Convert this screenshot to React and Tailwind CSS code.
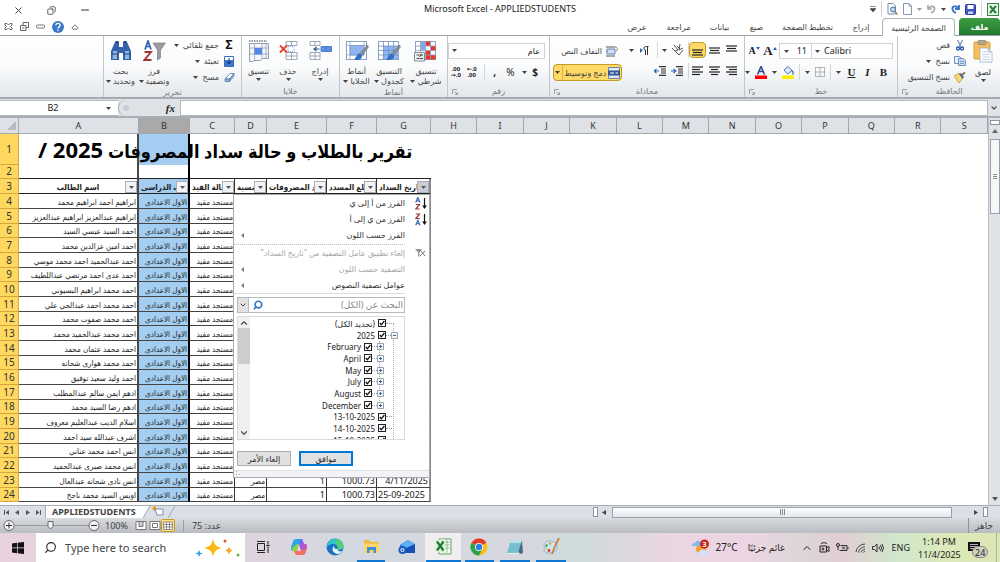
import { useState } from 'react'
import { Search, ChevronUp, ChevronDown, X, Minus, Copy } from 'lucide-react'
import clsx from 'clsx'

const UI = "font-['Noto_Sans','DejaVu_Sans',sans-serif]"
const CELL = "font-['Noto_Sans','DejaVu_Sans_Condensed','DejaVu_Sans',sans-serif]"

const tabs = [
  { label: 'إدراج', w: 'w-[42px]' },
  { label: 'تخطيط الصفحة', w: 'w-[65px]' },
  { label: 'صيغ', w: 'w-[37px]' },
  { label: 'بيانات', w: 'w-[37px]' },
  { label: 'مراجعة', w: 'w-[45px]' },
  { label: 'عرض', w: 'w-[38px]' },
]

const students = [
  'ابراهيم احمد ابراهيم محمد',
  'ابراهيم عبدالعزيز ابراهيم عبدالعزيز',
  'احمد السيد عيسي السيد',
  'احمد امين عزالدين محمد',
  'احمد عبدالحميد احمد محمد موسي',
  'احمد عدى احمد مرتضي عبداللطيف',
  'احمد محمد ابراهيم البسيوني',
  'احمد محمد احمد عبدالحي علي',
  'احمد محمد صفوت محمد',
  'احمد محمد عبدالحميد محمد',
  'احمد محمد عثمان محمد',
  'احمد محمد هوارى شحاته',
  'احمد وليد سعيد توفيق',
  'ادهم ايمن سالم عبدالمطلب',
  'ادهم رضا السيد محمد',
  'اسلام الديب عبدالعليم معروف',
  'اشرف عبدالله سيد احمد',
  'انس احمد محمد عناني',
  'انس محمد صبرى عبدالحميد',
  'انس نادى شحاته عبدالعال',
  'اويس السيد محمد ناجح',
]

// nationality, number of payments, amount, date
const payments = {
  23: ['مصر', '1', '1000.73', '4/11/2025'],
  24: ['مصر', '1', '1000.73', '25-09-2025'],
}

const headers = ['اسم الطالب', 'الصف الدراسى', 'حالة القيد', 'الجنسية', 'عدد المصروفات', 'مبلغ المسدد', 'تاريخ السداد']
const columns = 'ABCDEFGHIJKLMNOPQRS'.split('')

const tree = [
  { label: '(تحديد الكل)', level: 0 },
  { label: '2025', level: 0, box: '-' },
  { label: 'February', level: 1, box: '+' },
  { label: 'April', level: 1, box: '+' },
  { label: 'May', level: 1, box: '+' },
  { label: 'July', level: 1, box: '+' },
  { label: 'August', level: 1, box: '+' },
  { label: 'December', level: 1, box: '+' },
  { label: '13-10-2025', level: 0 },
  { label: '14-10-2025', level: 0 },
  { label: '15-10-2025', level: 0 },
]

/* ---------- small shared parts ---------- */

function Caret({ className = 'text-[#444]' }) {
  return (
    <svg width="5" height="3" viewBox="0 0 5 3" className={clsx('shrink-0', className)}>
      <path d="M0 0h5L2.500 3z" fill="currentColor" />
    </svg>
  )
}

function Sep() {
  return <span className="w-px h-4 bg-[#d3d6da] shrink-0" />
}

function Group({ label, w, launcher, children }) {
  return (
    <section className={clsx('flex flex-col border-l border-[#c3c7cc] shrink-0', w)}>
      <div className="h-[50px] flex">{children}</div>
      <div className="h-3 relative flex items-center justify-center text-[8px] leading-3 text-[#777]">
        {label}
        {launcher && (
          <svg width="6" height="6" viewBox="0 0 6 6" className="absolute left-1 top-1" fill="none" stroke="#8a8f96">
            <path d="M.5 5V.5H5M2.500 2.500l3 3M5.500 3v2.500H3" strokeWidth=".8" />
          </svg>
        )}
      </div>
    </section>
  )
}

function BigButton({ icon, lines, w, caretBelow }) {
  return (
    <button className={clsx('flex flex-col items-center pt-1 shrink-0', w)}>
      {icon}
      <span className="text-[8px] leading-[10px] mt-1 whitespace-nowrap">{lines[0]}</span>
      <span className={clsx('text-[8px] leading-[10px] flex items-center gap-0.5 whitespace-nowrap', caretBelow ? 'h-1.5' : 'h-[10px]')}>
        {lines[1]}
        <Caret />
      </span>
    </button>
  )
}

function SmallButton({ icon, label, caret }) {
  return (
    <button className="h-4 flex items-center gap-1 text-[8px] leading-4 whitespace-nowrap">
      <span className="w-3 flex justify-center">{icon}</span>
      {label}
      {caret && <Caret />}
    </button>
  )
}

function Lines({ rows, hl }) {
  return (
    <button className={clsx('w-[17px] h-4 flex items-center justify-center shrink-0', hl && 'rounded-sm border border-[#c29b29] bg-[#ffd966]')}>
      <svg width="11" height="11" viewBox="0 0 11 11" stroke="#222" strokeWidth="1.200" className="shrink-0">
        {rows.map(([x1, x2, y]) => <path key={y} d={`M${x1} ${y}H${x2}`} />)}
      </svg>
    </button>
  )
}

/* ---------- ribbon drawings ---------- */

const PasteIcon = (
  <svg width="20" height="23" viewBox="0 0 20 23">
    <rect x="1" y="2" width="16" height="17" rx="1" fill="#f5bd5c" stroke="#dba142" />
    <rect x="5" y="0.500" width="8" height="4" rx="1" fill="#b8a88a" stroke="#8b7d64" strokeWidth=".7" />
    <path d="M7 8h8l4 4v10H7z" fill="#fff" stroke="#9db0c8" strokeWidth=".8" />
    <path d="M9 12h5M9 14.500h8M9 17h8M9 19.500h8" stroke="#b9c8dc" strokeWidth=".8" />
    <path d="M15 8v4h4" fill="#dbe6f3" stroke="#9db0c8" strokeWidth=".8" />
  </svg>
)

const CutIcon = (
  <svg width="8" height="11" viewBox="0 0 8 11" fill="none">
    <path d="M1.500 0l3.500 7M6.500 0L3 7" stroke="#6c8db5" strokeWidth="1.200" />
    <circle cx="2" cy="8.500" r="1.500" stroke="#2456a6" strokeWidth="1.300" />
    <circle cx="6" cy="8.500" r="1.500" stroke="#2456a6" strokeWidth="1.300" />
  </svg>
)

const CopyIcon = (
  <svg width="12" height="10" viewBox="0 0 12 10">
    <path d="M.5.5h5l2 2v5h-7z" fill="#e5effb" stroke="#5579ad" strokeWidth=".8" />
    <path d="M4.500 2.500h4.500l2.500 2v5h-7z" fill="#c9ddf5" stroke="#5579ad" strokeWidth=".8" />
    <path d="M6 5.500h4M6 7.500h4" stroke="#5579ad" strokeWidth=".7" />
  </svg>
)

const PainterIcon = (
  <svg width="12" height="11" viewBox="0 0 12 11">
    <path d="M0 4l5-3 4 5-4 5z" fill="#f6d675" stroke="#c09132" strokeWidth=".7" />
    <path d="M5 2l2-1 3 4-1.500 2z" fill="#566b8d" />
    <path d="M8 3l3-2.500" stroke="#7b5425" strokeWidth="1.600" />
  </svg>
)

const ConditionalIcon = (
  <svg width="24" height="22" viewBox="0 0 24 22">
    <rect x="1.500" y="1.500" width="20" height="18" fill="#fff" stroke="#8aa2c4" />
    <path d="M11.500 1.500h5V6h-5zM16.500 6h5v4.500h-5zM11.500 10.500h5v4.500h-5zM11.500 15h10v4.500h-10z" fill="#e33a2c" />
    <path d="M6.500 1.500h5v9h-5z" fill="#7fabec" />
    <path d="M1.500 6h20M1.500 10.500h20M1.500 15h20M6.500 1.500v18M11.500 1.500v18M16.500 1.500v18" stroke="#8aa2c4" strokeWidth=".8" />
    <path d="M.5 12.500h10v8.500H.5z" fill="#eef1f5" stroke="#74808f" strokeWidth=".9" />
    <path d="M2.500 15h3M2.500 18.500h3M7.500 14L5.500 17M6 15h3M6 18.500h3" stroke="#333" strokeWidth=".9" />
  </svg>
)

function Brush() {
  return (
    <g>
      <path d="M22.500 5l-8 9 2 2L23.500 7z" fill="#8c8f96" stroke="#5d6066" strokeWidth=".5" />
      <path d="M14.500 13.500c-3 .5-3 4-5.500 6 4 1.500 8 0 8-4z" fill="#2f6fc5" />
    </g>
  )
}

const TableStyleIcon = (
  <svg width="24" height="22" viewBox="0 0 24 22">
    <rect x="1.500" y="1.500" width="20" height="18" fill="#fff" stroke="#8aa2c4" />
    <path d="M6.500 6h15v13h-15z" fill="#8eb7f2" />
    <path d="M1.500 6h20M1.500 10.500h20M1.500 15h20M6.500 1.500v18M11.500 1.500v18M16.500 1.500v18" stroke="#6f8fc0" strokeWidth=".8" />
    <Brush />
  </svg>
)

const CellStyleIcon = (
  <svg width="24" height="22" viewBox="0 0 24 22">
    <rect x="1.500" y="1.500" width="20" height="18" fill="#fff" stroke="#8aa2c4" />
    <path d="M5 5.500h14V15H5z" fill="#8eb7f2" stroke="#6f8fc0" strokeWidth=".8" />
    <path d="M5 1.500v18M1.500 5.500h20M19 1.500V15M1.500 15h17" stroke="#8aa2c4" strokeWidth=".7" />
    <Brush />
  </svg>
)

const InsertIcon = (
  <svg width="23" height="22" viewBox="0 0 23 22" fill="#fff" stroke="#8793a6" strokeWidth=".8">
    <path d="M1 1.500h10v4H1zM6 1.500v4M1 12.500h10v7H1zM6 12.500v7M1 16h10" />
    <path d="M12 6.500h10.500v5H12z" fill="#5b93e8" stroke="#3d6bb5" />
    <path d="M17 6.500v5" stroke="#3d6bb5" />
    <path d="M10.500 9H6M7.500 7L5 9l2.500 2" fill="none" stroke="#24588f" strokeWidth="1.200" />
  </svg>
)

const DeleteIcon = (
  <svg width="19" height="22" viewBox="0 0 19 22" fill="#fff" stroke="#8793a6" strokeWidth=".8">
    <path d="M7 1.500h11v4H7zM12.500 1.500v4M7 12.500h11v7H7zM12.500 12.500v7M7 16h11" />
    <path d="M9 6.500h6v5H9z" stroke="#5b93e8" strokeDasharray="1 1" />
    <path d="M1 5.500l7 7M8 5.500l-7 7" stroke="#e2412e" strokeWidth="1.800" />
  </svg>
)

const FormatIcon = (
  <svg width="24" height="22" viewBox="0 0 24 22">
    <path d="M2.500 3.500h19v15h-6l-2 2h-6l-2 1h-3z" fill="#f4f6f9" stroke="#7a89a0" strokeWidth=".8" />
    <path d="M2.500 8h19M2.500 14h19M7.500 3.500v17M15 3.500v15M19 3.500v15" stroke="#93a2b9" strokeWidth=".8" />
    <path d="M7.500 8H15v6.500H7.500z" fill="#4f8be6" />
    <path d="M2 1h18" stroke="#333" strokeDasharray="1.500 1" />
  </svg>
)

const SortFilterIcon = (
  <svg width="23" height="22" viewBox="0 0 23 22">
    <path d="M10 3h12.500l-5 7v8l-3 2v-10z" fill="#9a9da3" stroke="#6f7278" strokeWidth=".6" />
    <path d="M2 9.500L5 1l3 8.500M3 6.500h4" fill="none" stroke="#2f5fb0" strokeWidth="1.700" />
    <path d="M1.500 12H8l-6.500 8h7" fill="none" stroke="#a23434" strokeWidth="1.900" />
  </svg>
)

const BinocularsIcon = (
  <svg width="22" height="22" viewBox="0 0 22 22">
    <path d="M5 2h4v5h4V2h4l4 9v9h-8v-7H9v7H1v-9z" fill="#3462a8" />
    <path d="M3 11h4v8H2.500zM15 11h4v8h-4z" fill="#8fb3e4" />
    <path d="M5.500 1h3v2h-3zM13.500 1h3v2h-3z" fill="#1f437c" />
    <path d="M1 14h8M13 14h8" stroke="#1f437c" strokeWidth="1" />
  </svg>
)

function IndentIcon({ flip }) {
  return (
    <svg width="13" height="10" viewBox="0 0 13 10" stroke="#333" strokeWidth="1.100" fill="none" className="shrink-0">
      <path d="M5 .6h7M7 3h5M7 5h5M7 7h5M5 9.400h7" />
      <path d={flip ? 'M0 5h4M2.500 3L5 5 2.500 7' : 'M5 5H1M2.500 3L0 5l2.500 2'} stroke="#2a62b7" />
    </svg>
  )
}

/* ---------- window chrome ---------- */

function TitleBar() {
  return (
    <div className="h-[18px] relative flex items-center justify-between">
      <div className="flex items-center gap-[23px] pl-[13px] pt-0.5 text-[#333]">
        <button aria-label="Close"><X size={11} strokeWidth={2} /></button>
        <button aria-label="Restore"><Copy size={9} strokeWidth={2} className="-scale-x-100" /></button>
        <button aria-label="Minimize"><Minus size={12} strokeWidth={2} /></button>
      </div>
      <h1 className="absolute inset-x-0 text-center text-[9px] leading-[18px] pointer-events-none text-[#222]">
        Microsoft Excel - APPLIEDSTUDENTS
      </h1>
      <div className="flex items-center gap-[5px] pr-px">
        <svg width="6" height="6" viewBox="0 0 6 6"><path d="M0 .5h6M0 2.500h6L3 6z" stroke="#444" strokeWidth=".6" fill="#444" /></svg>
        <Sep />
        <svg width="11" height="12" viewBox="0 0 11 12" fill="#fff" stroke="#7288a8">
          <path d="M1 .5h5l2.500 2.500v8H1z" /><circle cx="6" cy="6.500" r="2.500" fill="#b7dcf5" stroke="#4b6d97" /><path d="M8 8.500l2.500 3" stroke="#b07f3c" strokeWidth="1.500" />
        </svg>
        <svg width="9" height="12" viewBox="0 0 9 12" fill="#fff" stroke="#8798b1"><path d="M.5.5h5.500l2.500 2.500v8.500h-8zM6 .5V3h2.500" /></svg>
        <Caret className="text-[#999]" />
        <svg width="9" height="10" viewBox="0 0 9 10" fill="none"><path d="M1 1v4h4M1.500 4.500C4 1 8 2 7.500 5.500 7 8 5 8.500 4 9" stroke="#aaa" strokeWidth="1.700" /></svg>
        <Caret />
        <svg width="9" height="10" viewBox="0 0 9 10" fill="none"><path d="M8 1v4H4M7.500 4.500C5 1 1 2 1.500 5.500 2 8 4 8.500 5 9" stroke="#3a74c8" strokeWidth="1.900" /></svg>
        <svg width="11" height="11" viewBox="0 0 11 11"><rect x=".5" y=".5" width="10" height="10" rx="1" fill="#4355c4" stroke="#2b3a96" /><path d="M2.500 1h6v4h-6z" fill="#fff" /><path d="M3 7.500h5V10H3z" fill="#cdd5f0" /></svg>
        <Sep />
        <svg width="12" height="13" viewBox="0 0 12 13"><rect x=".5" y=".5" width="11" height="12" fill="#e9f5e7" stroke="#2f8a3e" /><path d="M3 3l6 7M9 3l-6 7" stroke="#218036" strokeWidth="2" /></svg>
      </div>
    </div>
  )
}

function TabRow() {
  return (
    <div className="h-[18px] flex items-stretch justify-between border-b border-[#9aa0a6]">
      <div className="flex items-center gap-[7px] pl-1 text-[#555]">
        <svg width="9" height="9" viewBox="0 0 9 9" fill="none" stroke="#666"><path d="M1 1.500h2L4.500 3 6 1.500h2v1.500L6.500 4.500 8 6v1.500H6L4.500 6 3 7.500H1V6l1.500-1.500L1 3z" /></svg>
        <svg width="9" height="9" viewBox="0 0 9 9" fill="none" stroke="#666"><path d="M3 .5h5.500v5H6M3 .5V3M.5 3.500H6v5H.5zM2 6h2.500" /></svg>
        <svg width="9" height="5" viewBox="0 0 9 5" fill="none" stroke="#777"><rect x=".5" y="1" width="8" height="3" rx="1" /></svg>
        <svg width="12" height="12" viewBox="0 0 11 11"><circle cx="5.500" cy="5.500" r="5.500" fill="#3c78c9" /><path d="M3.500 4c0-2.500 4-2.500 4 0 0 1.500-2 1.300-2 3M5.500 8v1.200" stroke="#fff" strokeWidth="1.200" fill="none" /></svg>
        <svg width="8" height="6" viewBox="0 0 8 6" fill="none" stroke="#777"><path d="M4 .8L7.200 4 6 5.200H2L.8 4z" /></svg>
      </div>
      <nav dir="rtl" className="flex items-stretch text-[8px] leading-[17px] text-[#444]">
        <button className="w-[41px] ml-1 rounded-t-sm bg-gradient-to-b from-[#3f9d45] to-[#1f7a2c] text-white font-bold">ملف</button>
        <button className="w-[73px] -mb-px rounded-t-sm border border-b-0 border-[#b0b5bb] bg-white whitespace-nowrap">الصفحة الرئيسية</button>
        {tabs.map(t => (
          <button key={t.label} className={clsx('whitespace-nowrap', t.w)}>{t.label}</button>
        ))}
      </nav>
    </div>
  )
}

function Ribbon() {
  return (
    <div dir="rtl" className="h-[63px] flex bg-gradient-to-b from-white via-[#fafbfc] to-[#e3e7eb] border-b-2 border-[#a5a9b0] text-[#444]">
      <Group label="الحافظة" w="w-[103px]" launcher>
        <BigButton icon={PasteIcon} lines={['لصق', '']} w="w-[34px]" caretBelow />
        <div className="flex flex-col pt-px">
          <SmallButton icon={CutIcon} label="قص" />
          <SmallButton icon={CopyIcon} label="نسخ" caret />
          <SmallButton icon={PainterIcon} label="نسخ التنسيق" />
        </div>
      </Group>

      <Group label="خط" w="w-[153px]" launcher>
        <div className="flex flex-col w-full pt-[7px] pr-1 gap-[5px]">
          <div className="flex items-center">
            <button dir="ltr" className="w-[82px] h-4 border border-[#cfd2d6] bg-white flex items-center gap-1 px-[3px] text-[9px] leading-[14px] text-[#222]">
              <Caret />Calibri
            </button>
            <button dir="ltr" className="w-[32px] h-4 border border-r-0 border-[#cfd2d6] bg-white flex items-center justify-between px-1 text-[9px] leading-[14px] text-[#222]">
              <Caret />11
            </button>
            <button dir="ltr" className="w-[18px] flex justify-center font-['Liberation_Serif',serif] font-bold text-[13px] leading-4 text-[#222]">A<svg width="4" height="3" viewBox="0 0 4 3" className="mt-1"><path d="M2 0l2 3H0z" fill="#2a62b7" /></svg></button>
            <button dir="ltr" className="w-[14px] flex justify-center font-['Liberation_Serif',serif] font-bold text-[10px] leading-4 text-[#222]">A<svg width="4" height="3" viewBox="0 0 4 3" className="mt-1"><path d="M2 3l2-3H0z" fill="#2a62b7" /></svg></button>
          </div>
          <div className="flex items-center gap-[5px] pr-1 h-4 font-['Liberation_Serif',serif] text-[11px] leading-4 text-[#222]">
            <button className="w-3 font-bold">B</button>
            <button className="w-3 italic font-bold">I</button>
            <button className="w-3 font-bold underline">U</button>
            <Caret /><Sep />
            <svg width="10" height="10" viewBox="0 0 10 10" stroke="#777" strokeDasharray="1 1" fill="none" className="shrink-0"><path d="M.5.5h9v9h-9zM5 .5v9M.5 5h9" /></svg>
            <Caret /><Sep />
            <svg width="12" height="13" viewBox="0 0 12 13" className="shrink-0"><path d="M2 4l4-3.500 4 4L5.500 8z" fill="#dfe9f7" stroke="#4e79b8" /><path d="M9.500 4.500c2 1 2 3 1 4" stroke="#2f6fc5" strokeWidth="1.300" fill="none" /><path d="M0 9.500h12V13H0z" fill="#ffec00" /></svg>
            <Caret />
            <svg width="12" height="13" viewBox="0 0 12 13" className="shrink-0"><path d="M2.500 8.500L6 0.500l3.500 8M4 5.500h4" stroke="#2c4f8e" strokeWidth="1.600" fill="none" /><path d="M0 9.500h12V13H0z" fill="#f00" /></svg>
            <Caret />
          </div>
        </div>
      </Group>

      <Group label="محاذاة" w="w-[195px]" launcher>
        <div className="flex flex-col w-[122px] pt-[6px] pr-1 gap-[5px]">
          <div className="flex items-center">
            <Lines rows={[[0, 11, 1], [1, 10, 3.5], [0, 11, 6]]} />
            <Lines rows={[[0, 11, 3], [1, 10, 5.5], [0, 11, 8]]} />
            <Lines rows={[[0, 11, 5], [1, 10, 7.5], [0, 11, 10]]} hl />
            <Sep />
            <button className="flex items-center gap-1 px-1">
              <svg width="13" height="12" viewBox="0 0 13 12" fill="none" stroke="#444"><path d="M1 4l7 7M3 1l4 5-3 1M6 2l3 3M9 0l-1 6 4-2M12 6L8 11" strokeWidth=".9" /></svg>
              <Caret />
            </button>
            <Sep />
            <button className="flex items-center gap-1.5 px-2">
              <svg width="9" height="9" viewBox="0 0 9 9"><path d="M0 2v5l2.800-2.500z" fill="#2a62b7" /><path d="M8.500.6H5.500a1.700 1.700 0 000 3.400V9M7.500.6V9" stroke="#333" fill="none" /></svg>
              <Caret />
            </button>
          </div>
          <div className="flex items-center">
            <Lines rows={[[0, 11, 1], [3, 11, 3.5], [0, 11, 6], [3, 11, 8.5]]} />
            <Lines rows={[[0, 11, 1], [2, 9, 3.5], [0, 11, 6], [2, 9, 8.5]]} />
            <Lines rows={[[0, 11, 1], [0, 8, 3.5], [0, 11, 6], [0, 8, 8.5]]} />
            <Sep />
            <div className="flex gap-1 px-1"><IndentIcon flip /><IndentIcon /></div>
          </div>
        </div>
        <div className="flex flex-col items-start pt-[7px] gap-[5px]">
          <button className="h-4 flex items-center gap-1 pr-1 text-[8px] leading-4 whitespace-nowrap">
            <svg width="12" height="11" viewBox="0 0 12 11" fill="none" stroke="#555"><path d="M0 1h9M0 5.500h9M0 10h9" /><path d="M1 3h8v5H1z" fill="#cfe0f6" stroke="#6182b2" /><path d="M9 1c3 0 3 3 1 4.500" stroke="#c0733a" /></svg>
            التفاف النص
          </button>
          <button className="h-[17px] w-[69px] rounded-sm border border-[#c29b29] bg-[#ffd966] flex items-center justify-between px-px text-[8px] leading-[15px] whitespace-nowrap">
            <svg width="12" height="12" viewBox="0 0 12 12" className="shrink-0"><path d="M.5.5h11v11H.5z" fill="#dce8f8" stroke="#6a86b0" /><path d="M0 3.500h12v5H0z" fill="#31568f" /><path d="M2 6h2.500M10 6H7.500" stroke="#fff" /><path d="M4.500 4.500L6 6 4.500 7.500" fill="#fff" /></svg>
            دمج وتوسيط
            <span className="w-px h-full bg-[#d9b345]" />
            <Caret />
          </button>
        </div>
      </Group>

      <Group label="رقم" w="w-[102px]" launcher>
        <div className="flex flex-col w-full pt-[7px] pr-1 gap-[5px]">
          <div className="relative w-[97px]">
            <select aria-label="تنسيق الأرقام" className="block w-full h-4 border border-[#cfd2d6] bg-white appearance-none px-1 text-[8px] leading-[14px] text-[#222]">
              <option>عام</option>
            </select>
            <span className="absolute left-1 top-1.5 pointer-events-none"><Caret /></span>
          </div>
          <div className="flex items-center h-4 pr-1 text-[10px] leading-4 text-[#222]">
            <button className="w-3 font-bold">$</button>
            <span className="w-[9px] flex justify-center"><Caret /></span>
            <button className="w-5">%</button>
            <button className="w-3 font-bold">,</button>
            <span className="px-1"><span className="block w-px h-4 bg-[#d3d6da]" /></span>
            <button dir="ltr" className="w-4 text-[6px] leading-[6px] font-bold text-center">←.0<br />.00</button>
            <button dir="ltr" className="w-4 text-[6px] leading-[6px] font-bold text-center">.00<br />→.0</button>
          </div>
        </div>
      </Group>

      <Group label="أنماط" w="w-[108px]">
        <BigButton icon={ConditionalIcon} lines={['تنسيق', 'شرطي']} w="w-[42px]" />
        <BigButton icon={TableStyleIcon} lines={['التنسيق', 'كجدول']} w="w-[32px]" />
        <BigButton icon={CellStyleIcon} lines={['أنماط', 'الخلايا']} w="w-[33px]" />
      </Group>

      <Group label="خلايا" w="w-[98px]">
        <BigButton icon={InsertIcon} lines={['إدراج', '']} w="w-[38px]" caretBelow />
        <BigButton icon={DeleteIcon} lines={['حذف', '']} w="w-[26px]" caretBelow />
        <BigButton icon={FormatIcon} lines={['تنسيق', '']} w="w-[33px]" caretBelow />
      </Group>

      <Group label="تحرير" w="w-[138px]">
        <div className="flex flex-col pt-px pr-[6px] w-[70px]">
          <SmallButton icon={<span className="text-[12px] font-bold text-[#111]">Σ</span>} label="جمع تلقائي" caret />
          <SmallButton
            icon={<svg width="10" height="11" viewBox="0 0 10 11"><path d="M.5.5h9v10h-9z" fill="#fff" stroke="#3d6bb5" /><path d="M1 4h8v6H1z" fill="#3f78d0" /><path d="M5 2v5M3 5.500L5 8l2-2.500" stroke="#17335f" fill="none" /></svg>}
            label="تعبئة" caret
          />
          <SmallButton
            icon={<svg width="11" height="9" viewBox="0 0 11 9"><path d="M1 6l5-5.500h4L5.500 6z" fill="#fff" stroke="#5373a8" strokeWidth=".8" /><path d="M1 6h4.500v2.500H1zM5.500 6L10 .5v2.500L5.500 8.500z" fill="#8eb0e0" stroke="#5373a8" strokeWidth=".7" /></svg>}
            label="مسح" caret
          />
        </div>
        <BigButton icon={SortFilterIcon} lines={['فرز', 'وتصفية']} w="w-[34px]" />
        <BigButton icon={BinocularsIcon} lines={['بحث', 'وتحديد']} w="w-[33px]" />
      </Group>
      <div className="flex-1" />
    </div>
  )
}

function FormulaBar() {
  return (
    <div className="h-[19px] flex items-stretch bg-[#dfe2e6] border-b-2 border-[#a9adb6] pt-px">
      <label className="w-[118px] flex items-center bg-white border-y border-[#b4b8bd]">
        <input aria-label="Name box" defaultValue="B2" className="w-[106px] text-center text-[9px] leading-4 text-[#222] outline-none" />
        <Caret />
      </label>
      <div className="w-[62px] flex items-center justify-between pl-1 pr-[5px] rounded-l-full border-l border-[#aaa]">
        <span className="w-1.5 h-1.5 rounded-full bg-[#c9ccd1]" />
        <span className="font-['Liberation_Serif',serif] italic font-bold text-[11px] leading-4 text-[#222]">fx</span>
      </div>
      <input aria-label="Formula" className="flex-1 min-w-0 bg-white border border-[#b4b8bd] outline-none" />
      <button aria-label="Expand" className="w-3 flex items-center justify-center"><ChevronDown size={8} strokeWidth={4} className="text-[#555]" /></button>
    </div>
  )
}

/* ---------- sheet ---------- */

function FilterButton({ active }) {
  return (
    <button aria-label="تصفية" className={clsx('absolute right-0 top-0.5 w-3 h-3 border border-[#a9adb5] flex items-center justify-center', active ? 'bg-[#c9ced8]' : 'bg-[#f1f3f7]')}>
      <Caret className="text-[#555]" />
    </button>
  )
}

const edge = i => clsx(
  i === 0 && 'border-r-2 border-r-[#4a4a4a]',
  i === 1 && 'border-r-2 border-r-black',
  i > 1 && i < 6 && 'border-r border-r-[#333]',
  i === 6 && 'border-r-2 border-r-[#8a8a8a]',
)

const rowHead = 'bg-[#ffd95f] border-b border-r border-[#d7a63c] text-center text-[10px] font-normal text-[#333]'

function Row({ n, name }) {
  const cells = [name, 'الاول الاعدادى', 'مستجد مقيد', ...(payments[n] || ['', '', '', ''])]
  return (
    <tr className={n % 3 === 0 ? 'h-[14px]' : 'h-[15px]'}>
      <th className={rowHead}>{n}</th>
      {cells.map((c, i) => (
        <td
          key={i}
          dir={i > 3 ? 'ltr' : 'rtl'}
          className={clsx(
            'border-b border-b-[#444] overflow-hidden px-px',
            i > 3 ? 'text-[9px]' : 'text-[8px]',
            c === '25-09-2025' ? 'text-left' : 'text-right',
            edge(i),
            i === 1 && 'bg-[#a3cef1]',
          )}>
          {c}
        </td>
      ))}
      <td colSpan={12} />
    </tr>
  )
}

function Sheet() {
  return (
    <table className={clsx('w-full table-fixed border-separate border-spacing-0 text-[#222] leading-[13px] whitespace-nowrap', CELL)}>
      <colgroup>
        <col className="w-[19px]" /><col className="w-[120px]" /><col className="w-[51px]" /><col className="w-[45px]" />
        <col className="w-8" /><col className="w-[60px]" /><col className="w-[50px]" /><col className="w-[54px]" />
      </colgroup>
      <thead>
        <tr className="h-4">
          <th className="bg-[#dee1e6] border-b border-r border-[#a3a7ad]">
            <svg width="9" height="9" viewBox="0 0 9 9" className="ml-auto mr-0.5"><path d="M9 0v9H0z" fill="#b6bac1" /></svg>
          </th>
          {columns.map(c => (
            <th key={c} className={clsx('border-b border-r border-[#a3a7ad] text-[9px] font-normal text-[#333]', c === 'B' ? 'bg-[#a9a9a9]' : 'bg-[#dee1e6]')}>{c}</th>
          ))}
        </tr>
      </thead>
      <tbody>
        <tr className="h-[31px]">
          <th className={rowHead}>1</th>
          <td className={clsx('relative', edge(0))}>
            <span dir="rtl" className="absolute z-10 top-0 left-[19px] text-[18px] leading-[30px] font-bold text-black">
              تقرير بالطلاب و حالة سداد المصروفات <span className="text-[22px]">2025 /</span>
            </span>
          </td>
          <td className={clsx('bg-[#a3cef1]', edge(1))} />
          <td colSpan={17} />
        </tr>
        <tr className="h-[14px]">
          <th className={rowHead}>2</th>
          <td className={clsx('border-b border-b-[#222]', edge(0))} />
          <td className={clsx('border-b border-b-[#222]', edge(1))} />
          <td colSpan={5} className="border-b border-b-[#222]" />
          <td colSpan={12} />
        </tr>
        <tr className="h-[15px]">
          <th className={rowHead}>3</th>
          {headers.map((h, i) => (
            <th
              key={h}
              className={clsx(
                'relative border-b border-b-[#222] text-[8px] overflow-hidden',
                i === 0 ? 'text-center' : 'text-left pl-0.5',
                edge(i),
                i === 1 && 'bg-[#a3cef1]',
              )}>
              {h}
              <FilterButton active={i === 6} />
            </th>
          ))}
          <td colSpan={12} />
        </tr>
        {students.map((s, i) => <Row key={s} n={i + 4} name={s} />)}
      </tbody>
    </table>
  )
}

function MenuItem({ label, icon, sub, disabled }) {
  return (
    <button disabled={disabled} className={clsx('w-full h-4 flex items-center gap-[7px] text-[8px] leading-4 whitespace-nowrap', disabled ? 'text-[#a6a6a6]' : 'text-[#333]')}>
      <span className="w-[17px] flex justify-center shrink-0">{icon}</span>
      <span>{label}</span>
      {sub && <svg width="3" height="5" viewBox="0 0 3 5" className="mr-auto ml-[7px]"><path d="M3 0v5L0 2.500z" fill="#777" /></svg>}
    </button>
  )
}

const AzIcon = (
  <svg width="12" height="13" viewBox="0 0 12 13" fill="none">
    <path d="M.7 5.500L2.800.5 5 5.500M1.500 4h2.700" stroke="#2f5fb0" strokeWidth="1.100" />
    <path d="M.8 7.500h3.700l-3.700 4.500h4" stroke="#a23434" strokeWidth="1.200" />
    <path d="M9.500 1v9" stroke="#111" strokeWidth="1.200" /><path d="M7.200 8.500h4.600L9.500 12z" fill="#111" />
  </svg>
)

const ZaIcon = (
  <svg width="12" height="13" viewBox="0 0 12 13" fill="none">
    <path d="M.8 1h3.700L.8 5.500h4" stroke="#a23434" strokeWidth="1.200" />
    <path d="M.7 12.300L2.800 7.300 5 12.300M1.500 10.800h2.700" stroke="#2f5fb0" strokeWidth="1.100" />
    <path d="M9.500 1v9" stroke="#111" strokeWidth="1.200" /><path d="M7.200 8.500h4.600L9.500 12z" fill="#111" />
  </svg>
)

function TreeRow({ item, i }) {
  const [on, setOn] = useState(true)
  return (
    <div className={clsx('flex items-center shrink-0', i % 3 === 2 ? 'h-[11px]' : 'h-3', item.level ? 'pr-5' : 'pr-1.5')}>
      <span className="w-3 flex items-center shrink-0">
        {item.box
          ? <svg width="7" height="7" viewBox="0 0 7 7" fill="#f4f6fa" stroke="#9aa3b1" className="relative shrink-0"><path d="M.5.5h6v6h-6z" /><path d={item.box === '+' ? 'M2 3.500h3M3.500 2v3' : 'M2 3.500h3'} stroke="#3d63a8" /></svg>
          : <span className="w-2 mr-1 border-t border-dotted border-[#999]" />}
        {item.box && <span className="flex-1 border-t border-dotted border-[#999]" />}
      </span>
      <label className="flex items-center gap-[3px] text-[8px] leading-[11px] text-[#222] whitespace-nowrap">
        <span className="relative w-2 h-2 shrink-0">
          <input type="checkbox" checked={on} onChange={() => setOn(!on)} className="block appearance-none w-2 h-2 border border-[#222] bg-white" />
          {on && <svg width="8" height="8" viewBox="0 0 8 8" className="absolute inset-0 pointer-events-none"><path d="M1.800 4l1.500 1.800L6.400 2" stroke="#111" strokeWidth="1.300" fill="none" /></svg>}
        </span>
        <span>{item.label}</span>
      </label>
    </div>
  )
}

function FilterMenu() {
  return (
    <div dir="rtl" className="absolute z-20 left-[233px] top-[76px] w-[197px] bg-white border border-[#a7abb0] flex flex-col">
      <MenuItem label="الفرز من أ إلى ي" icon={AzIcon} />
      <MenuItem label="الفرز من ي إلى أ" icon={ZaIcon} />
      <MenuItem label="الفرز حسب اللون" sub />
      <div className="mr-[24px] h-[2px] border-b border-dotted border-[#bbb]" />
      <MenuItem
        label={'إلغاء تطبيق عامل التصفية من "تاريخ السداد"'}
        icon={<svg width="11" height="10" viewBox="0 0 11 10"><path d="M0 1h7L4.500 4.500V9L3 8V4.500z" fill="#999" /><path d="M5 2l5 6M10 3L5 8" stroke="#777" /></svg>}
        disabled
      />
      <MenuItem label="التصفية حسب اللون" sub disabled />
      <MenuItem label="عوامل تصفية النصوص" sub />
      <div className="mr-[24px] h-px bg-[#ddd]" />

      <div className="mr-[24px] ml-[3px] flex flex-col">
        <div className="mt-[3px] h-4 flex items-center border border-[#b6b9be]">
          <input aria-label="البحث" placeholder="البحث عن (الكل)" className="flex-1 min-w-0 px-px text-[9px] leading-[14px] outline-none placeholder:text-[#888]" />
          <Search size={10} strokeWidth={4} className="text-[#2f78c4] ml-1 -scale-x-100" />
          <button aria-label="خيارات البحث" className="w-[11px] h-full bg-[#e1e1e1] border-r border-[#b6b9be] flex items-center justify-center"><ChevronDown size={8} strokeWidth={3} className="text-[#444]" /></button>
        </div>

        <div className="mt-[3px] h-[124px] flex border border-[#d8dadd] overflow-hidden">
          <div className="flex-1 relative flex flex-col overflow-hidden">
            <span className="absolute right-[10px] top-1.5 bottom-0 border-r border-dotted border-[#aaa]" />
            <span className="absolute right-6 top-6 h-[66px] border-r border-dotted border-[#aaa]" />
            {tree.map((t, i) => <TreeRow key={t.label} item={t} i={i} />)}
          </div>
          <div className="w-3 bg-[#f0f0f0] flex flex-col items-center justify-between py-px">
            <ChevronUp size={10} strokeWidth={3} className="text-[#555]" />
            <div className="w-full h-9 bg-[#cdcdcd]" />
            <div className="flex-1" />
            <ChevronDown size={10} strokeWidth={3} className="text-[#555]" />
          </div>
        </div>

        <div dir="ltr" className="mt-[11px] mb-1 flex gap-2 text-[8px] leading-[13px] text-[#222]">
          <button className="w-[54px] h-[15px] border border-[#adadad] bg-[#e1e1e1]">إلغاء الأمر</button>
          <button className="w-[54px] h-[15px] border-2 border-[#0078d7] bg-[#e1e1e1] leading-[11px]">موافق</button>
        </div>
      </div>
      <div dir="ltr" className="h-[7px] bg-[#f1f3f6] border-t border-[#dfe1e5] px-0.5">
        <svg width="5" height="5" viewBox="0 0 5 5" fill="#aab0ba"><path d="M0 0h1v1H0zM0 3h1v1H0zM3 3h1v1H3z" /></svg>
      </div>
    </div>
  )
}

function VerticalScroll() {
  return (
    <div className="w-3 shrink-0 bg-[#dfe3e8] border-l border-[#b9bdc4] flex flex-col items-center">
      <div className="w-2.5 h-[5px] mt-0.5 border border-[#8f949c] bg-white" />
      <svg width="6" height="4" viewBox="0 0 6 4" className="my-1"><path d="M3 0l3 4H0z" fill="#666" /></svg>
      <div className="w-2.5 h-[75px] mt-0.5 border border-[#9aa0a9] bg-[#f5f7f9] flex flex-col items-center justify-center gap-px">
        <span className="w-1 h-px bg-[#888]" /><span className="w-1 h-px bg-[#888]" /><span className="w-1 h-px bg-[#888]" />
      </div>
      <div className="flex-1" />
      <svg width="6" height="4" viewBox="0 0 6 4" className="mb-1"><path d="M3 4l3-4H0z" fill="#555" /></svg>
    </div>
  )
}

function SheetTabs() {
  return (
    <div className="h-[13px] flex items-stretch bg-[#dbe0e8] border-t border-[#a9adb4]">
      <div className="w-[46px] flex items-center justify-around px-px border-r border-[#a9adb4]">
        <svg width="5" height="5" viewBox="0 0 5 5" fill="#555"><path d="M0 0h1v5H0zM5 0v5L1.500 2.500z" /></svg>
        <svg width="4" height="5" viewBox="0 0 4 5" fill="#555"><path d="M4 0v5L0 2.500z" /></svg>
        <svg width="4" height="5" viewBox="0 0 4 5" fill="#555"><path d="M0 0v5l4-2.500z" /></svg>
        <svg width="5" height="5" viewBox="0 0 5 5" fill="#555"><path d="M4 0h1v5H4zM0 0v5l3.500-2.500z" /></svg>
      </div>
      <button className="bg-white px-[6px] text-[9px] leading-3 font-bold text-[#444]">APPLIEDSTUDENTS</button>
      <svg width="34" height="12" viewBox="0 0 34 12" fill="none">
        <path d="M0 0h8L1 12H0z" fill="#fff" /><path d="M8 0L1 12M33 0l-7 12" stroke="#a0a6af" />
        <path d="M13 3h8v6h-6z" fill="#fff" stroke="#7390bd" /><path d="M10 2.500h5M12.500 0v5M11 1l3 3M14 1l-3 3" stroke="#e79a2c" />
      </svg>
      <div className="flex-1" />
      <span className="w-[5px] my-px border border-[#8f949c] bg-white" />
      <div className="w-[402px] max-w-[41%] flex items-center gap-1 px-1">
        <svg width="4" height="5" viewBox="0 0 4 5" className="mr-0.5"><path d="M4 0v5L0 2.500z" fill="#444" /></svg>
        <div className="w-[340px] h-[11px] border border-[#9aa0a9] bg-gradient-to-b from-white to-[#e3e7ed] flex items-center justify-center gap-px">
          <span className="w-px h-1.5 bg-[#888]" /><span className="w-px h-1.5 bg-[#888]" /><span className="w-px h-1.5 bg-[#888]" />
        </div>
        <div className="flex-1" />
        <svg width="4" height="5" viewBox="0 0 4 5"><path d="M0 0v5l4-2.500z" fill="#444" /></svg>
        <span className="w-[5px] h-[10px] ml-px mr-2 border border-[#8f949c] bg-white" />
      </div>
    </div>
  )
}

function StatusBar() {
  return (
    <div className="h-[15px] flex items-center justify-between bg-gradient-to-b from-[#d9dbde] to-[#b9bcc1] text-[9px] leading-[15px] text-[#444]">
      <div className="flex items-center">
        <svg width="100" height="13" viewBox="0 0 100 13" className="ml-[3px]" fill="#f2f3f5" stroke="#666">
          <path d="M12 6.500h74" stroke="#999" />
          <circle cx="6" cy="6.500" r="5" /><path d="M3 6.500h6M6 3.500v6" stroke="#333" />
          <circle cx="91" cy="6.500" r="5" /><path d="M88 6.500h6" stroke="#333" />
          <path d="M45 2.500h5v5l-2.500 2.500L45 7.500z" />
        </svg>
        <span className="ml-0.5 mr-1.5">100%</span>
        <svg width="41" height="13" viewBox="0 0 41 13" fill="#fff" stroke="#777">
          <path d="M2 2.500h10v8H2zM5 2.500v5h4v-5" /><path d="M16 2.500h10v8H16zM18.500 4.500h5v4h-5z" />
          <rect x="27.500" y=".5" width="13" height="12" rx="1" fill="#ffdf80" stroke="#c29b29" />
          <path d="M29.500 3h9v7.500h-9zM29.500 5.500h9M29.500 8h9M32.500 3v7.500M35.500 3v7.500" strokeWidth=".8" />
        </svg>
        <span className="w-px h-3 mx-2 bg-[#9a9da2]" />
        <span dir="rtl">عدد: 75</span>
      </div>
      <span className="h-full border-l border-[#8f9399] pl-1.5 pr-[7px]">جاهز</span>
    </div>
  )
}

/* ---------- taskbar ---------- */

const apps = [
  { name: 'Task view', icon: <svg width="14" height="14" viewBox="0 0 14 14" fill="none" stroke="#222"><path d="M1 1.500h8M1 12.500h8M1.500 3.500h7v7h-7zM12 1v3M12 7v6" /><path d="M10.500 5.500h3" strokeWidth="1.500" /></svg> },
  { name: 'Copilot', icon: <svg width="18" height="18" viewBox="0 0 18 18"><path d="M6 1h5c2 0 2 3 3 5H7L5 13H3c-3 0-2-4-1-7s2-5 4-5z" fill="#28a8ea" /><path d="M11 1c2 0 2 3 3 5h1c3 0 2 4 1 7s-2 4-4 4L9 6z" fill="#8b5cf0" /><path d="M12 17H7c-2 0-2-2-3-4h7l2-7h2c3 0 2 4 1 7s-2 4-4 4z" fill="#f2725e" /><path d="M2 10c-1 2 0 3 2 3h3l2-7H7z" fill="#8fd14b" /><path d="M12 6h3c2 0 2 2 1 5l-4 1z" fill="#c34fc8" /></svg> },
  { name: 'Edge', icon: <svg width="18" height="18" viewBox="0 0 18 18"><circle cx="9" cy="9" r="8.500" fill="#1671c9" /><path d="M1 8c1-9 15-10 16.500 0 0 4-5 4.500-6.500 3 2-3-1-5-4-5S1 8 1 10z" fill="#35c1c9" /><path d="M9 1c5 0 8.500 3 8.500 7.500 0 3-4 4-6.500 2.500 1-1 1-3-.5-4z" fill="#53cf7a" /><path d="M11 11c-3 0-3-2-2.500-3-3 1-3 7 3 8 2 0 4-1.500 4.500-3-2 1-3.500.5-5-2z" fill="#e6f3fa" /></svg> },
  { name: 'Explorer', w: 'w-7', icon: <svg width="17" height="15" viewBox="0 0 17 15"><path d="M1 1h5l1.500 2H16v11H1z" fill="#f4b63f" /><path d="M1 4.500h15V14H1z" fill="#fdd36a" /><path d="M4 8h9v6h-2.500v-3h-4v3H4z" fill="#3d8fdb" /></svg> },
  { name: 'Mail', icon: <svg width="18" height="16" viewBox="0 0 18 16"><path d="M2 6l8-5 7 4v9H4z" fill="#1d74e0" /><path d="M10 1l7 4-7 5-7-4z" fill="#5fb0f6" /><path d="M8 9l9-4v9H8z" fill="#1550b8" /><circle cx="4.500" cy="11" r="4" fill="#1257c0" /><circle cx="4.500" cy="11" r="1.600" fill="none" stroke="#fff" /></svg> },
  { name: 'Excel', w: 'w-[35px]', active: true, icon: <svg width="17" height="17" viewBox="0 0 17 17"><path d="M4 1h12v15H4z" fill="#fff" stroke="#5d9d56" /><path d="M9 4h6M9 7h6M9 10h6M12 2v13" stroke="#8bbf83" /><path d="M0 2l10-1v14l-10-1z" fill="#dff0da" /><path d="M2 3.500l6.500 9M8.500 3.500l-6.500 9" stroke="#1e7b34" strokeWidth="2.200" /></svg> },
  { name: 'Chrome', w: 'w-[29px]', icon: <svg width="18" height="18" viewBox="0 0 18 18"><circle cx="9" cy="9" r="8.500" fill="#fbc116" /><path d="M9 9L1.600 4.700A8.500 8.500 0 0116.400 4.700z" fill="#e33b2e" /><path d="M9 9L1.600 4.700A8.500 8.500 0 009 17.500l3.500-6.500z" fill="#2ba24c" /><circle cx="9" cy="9" r="4" fill="#fff" /><circle cx="9" cy="9" r="3.200" fill="#2b7de9" /></svg> },
  { name: 'Notepad', w: 'w-[30px]', icon: <svg width="18" height="16" viewBox="0 0 18 16"><path d="M5 1h11l1 13-3 1z" fill="#4a6a7c" /><path d="M5 1h11l-4 13H1z" fill="#74bfd0" /><path d="M5 1h11l-1 3H4z" fill="#b7e2ea" /><path d="M1 14h11v1H2z" fill="#eee" /></svg> },
  { name: 'Paint', w: 'w-[30px]', icon: <svg width="19" height="17" viewBox="0 0 19 17"><path d="M8 3c5 0 8 3 7 7-1 5-10 7-13 3-1-2 2-2 1-4C0 7 3 3 8 3z" fill="#cfe4f1" stroke="#7ca3bd" strokeWidth=".7" /><circle cx="4.500" cy="7.500" r="1.200" fill="#3c9c47" /><circle cx="8" cy="5.500" r="1.200" fill="#e8a020" /><circle cx="7" cy="12.500" r="1.400" fill="#d93b30" /><circle cx="4.500" cy="11" r="1" fill="#f0cf30" /><path d="M17 0l-4 8-3 8" stroke="#c9803c" strokeWidth="1.800" fill="none" /></svg> },
]

function Taskbar() {
  return (
    <footer className="h-[29px] flex items-stretch bg-[linear-gradient(90deg,#e8d3df_0%,#e3d3de_22%,#d3d9e0_35%,#d7d7df_50%,#cfdbdc_58%,#ead5e2_67%,#ecd5e2_75%,#dcd6d8_80%,#e2cdd3_84%,#cfe8cc_90%,#dde9b8_95%,#dce5b6_100%)]">
      <button aria-label="Start" className="w-9 flex items-center justify-center">
        <svg width="12" height="12" viewBox="0 0 12 12" fill="#111"><path d="M0 1.500l5-.7v4.700H0zM5.700.7L12 0v5.500H5.700zM0 6.300h5v4.900l-5-.7zM5.700 6.300H12V12l-6.300-.8z" /></svg>
      </button>
      <label className="w-[209px] bg-white flex items-center pl-2 pr-1">
        <Search size={13} strokeWidth={2} className="text-[#222] -scale-x-100 shrink-0" />
        <input placeholder="Type here to search" className="flex-1 min-w-0 ml-2 text-[11px] leading-7 outline-none placeholder:text-[#444]" />
        <svg width="46" height="20" viewBox="0 0 46 20">
          <path d="M18 1c1.500 6 2.500 7 8.500 9-6 2-7 3-8.500 8.500C16.500 13 15.500 12 9.500 10c6-2 7-3 8.500-9z" fill="#f8b912" />
          <path d="M34 8c.7 3 1.300 3.500 4 4.500-2.700 1-3.300 1.500-4 4.500-.7-3-1.300-3.500-4-4.500 2.700-1 3.300-1.500 4-4.500z" fill="#f6a82a" />
          <path d="M4 12l1 2.500 2.500 1-2.500 1L4 19l-1-2.500-2.500-1 2.500-1z" fill="#27a0e8" />
          <circle cx="30" cy="3" r="1.500" fill="#e3562c" /><circle cx="43" cy="17" r="1.500" fill="#65b447" />
        </svg>
      </label>
      <div className="flex">
        {apps.map(a => (
          <button key={a.name} aria-label={a.name} className={clsx('w-9 flex flex-col items-center justify-between', a.active && 'bg-[#f1eef2]')}>
            <span className="h-[27px] flex items-center">{a.icon}</span>
            {a.w && <span className={clsx('h-0.5 bg-[#0f78d4]', a.w)} />}
          </button>
        ))}
      </div>
      <div className="flex-1" />
      <div className="flex items-center text-[#222] text-[9px]">
        <svg width="19" height="18" viewBox="0 0 19 18">
          <circle cx="10" cy="10" r="5" fill="#f3a12c" /><path d="M1 7a3 3 0 013-3c1-3 5-3 6 0v3z" fill="#86b7ea" /><path d="M7 16a3 3 0 012-4c1-2 5-2 6 0 3 0 3 4 0 4z" fill="#cfe3f8" />
          <circle cx="13.500" cy="5" r="4.500" fill="#c9271e" /><text x="13.500" y="7.500" fontSize="7" fontWeight="bold" textAnchor="middle" fill="#fff">3</text>
        </svg>
        <span className="ml-1.5 text-[10px]">27°C</span>
        <span dir="rtl" className="ml-[7px] w-10 whitespace-nowrap">غائم جزئيًا</span>
        <ChevronUp size={12} strokeWidth={2} className="ml-4" />
        <div className="ml-1.5 flex items-center gap-1.5">
          <svg width="11" height="12" viewBox="0 0 11 12" fill="none" stroke="#222"><path d="M1 4h6.500v6H1zM7.500 6l2.500-1.500v5L7.500 8M2 1.500c2-1 4-1 6 0" /><circle cx="4" cy="7" r="1" /></svg>
          <svg width="13" height="9" viewBox="0 0 13 9" fill="none" stroke="#222"><path d="M4.500 2.500H11v5H3.500M12 4v2M6 3.500l3 3M9 3.500l-3 3" strokeWidth=".9" /><circle cx="2" cy="2" r="1.500" /><path d="M2 3.500V7" /></svg>
          <svg width="11" height="10" viewBox="0 0 11 10" fill="none" stroke="#444"><path d="M1 9A9 9 0 0110 1M3.500 9.500A6 6 0 0110 4M6 9.500A4 4 0 0110 6.500M8.500 9.500a2 2 0 011.500-1" /></svg>
          <svg width="12" height="10" viewBox="0 0 12 10" fill="none" stroke="#222"><path d="M.5 3.500h2L5 1v8L2.500 6.500h-2zM7 3.500q1 1.500 0 3M8.500 2q2 3 0 6M10 1q3 4 0 8" strokeWidth=".9" /></svg>
        </div>
        <span className="ml-2">ENG</span>
        <div className="w-[42px] ml-2 text-center leading-[13px]">
          <p>1:14 PM</p>
          <p>11/4/2025</p>
        </div>
        <div className="ml-2 relative w-[22px] h-5">
          <svg width="12" height="12" viewBox="0 0 12 12" className="mt-1"><path d="M0 0h12v9H8l-2.500 2.500V9H0z" fill="#111" /><path d="M2 2.500h8M2 4.500h8M2 6.500h5" stroke="#ddd" strokeWidth=".8" /></svg>
          <span className="absolute left-1 top-2 px-0.5 h-3 leading-[11px] rounded-full bg-[#cfd3bf] border border-[#888] text-[9px]">24</span>
        </div>
        <span className="w-px h-full ml-1.5 mr-[3px] bg-[#aab38f]" />
      </div>
    </footer>
  )
}

export default function App() {
  return (
    <div className={clsx('h-screen flex flex-col bg-white overflow-hidden', UI)}>
      <TitleBar />
      <TabRow />
      <Ribbon />
      <FormulaBar />
      <main className="flex-1 min-h-0 flex">
        <div className="flex-1 min-w-0 relative overflow-hidden">
          <Sheet />
          <FilterMenu />
        </div>
        <VerticalScroll />
      </main>
      <SheetTabs />
      <StatusBar />
      <Taskbar />
    </div>
  )
}
